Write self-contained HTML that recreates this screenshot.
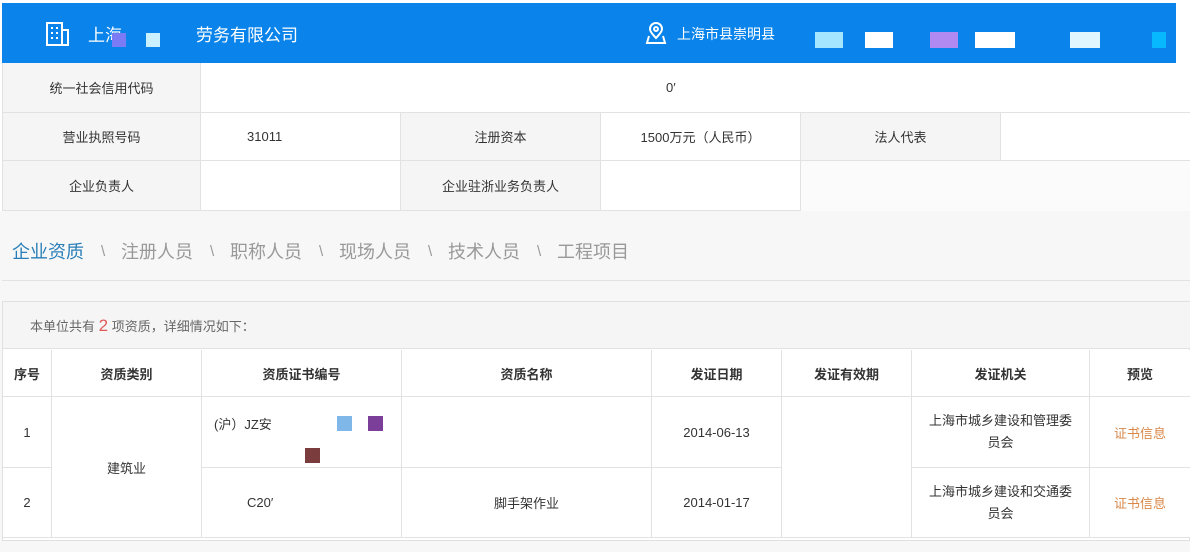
<!DOCTYPE html>
<html><head><meta charset="utf-8"><style>
*{margin:0;padding:0;box-sizing:border-box}
body{width:1190px;height:552px;background:#f7f7f7;font-family:"Liberation Sans","Noto Sans CJK SC",sans-serif;color:#333;position:relative;overflow:hidden;font-size:13px}
.a{position:absolute}
.c{position:absolute;display:flex;align-items:center;justify-content:center;text-align:center;border-right:1px solid #e2e2e2;border-bottom:1px solid #e2e2e2}
.g{background:#f5f5f5}
.w{background:#fff}
.t{position:absolute;top:238px;font-size:18px;color:#999}
.s{position:absolute;top:243px;font-size:15px;color:#999;font-family:"Liberation Sans",sans-serif}
</style></head><body>
<div class="a" style="left:0;top:0;width:1190px;height:63px;background:#fff"></div>
<div class="a" style="left:2px;top:3px;width:1174px;height:60px;background:#0a84ea"></div>
<svg class="a" style="left:45px;top:21px" width="26" height="26" viewBox="0 0 26 26" fill="none" stroke="#fff" stroke-width="2"><rect x="2" y="2" width="15" height="22"/><path d="M17 9h6v15H1M6 7h2M11 7h2M6 12h2M11 12h2M6 17h2M11 17h2"/></svg>
<div class="a" style="left:88px;top:21px;color:#fff;font-size:17px">上海</div>
<div class="a" style="left:112px;top:33px;width:14px;height:14px;background:#7b7cf5"></div>
<div class="a" style="left:146px;top:33px;width:14px;height:14px;background:#c8f0ff"></div>
<div class="a" style="left:196px;top:21px;color:#fff;font-size:17px">劳务有限公司</div>
<svg class="a" style="left:645px;top:22px" width="22" height="22" viewBox="0 0 22 22" fill="none" stroke="#fff" stroke-width="2"><path d="M11 16c-4-4-6-7-6-9a6 6 0 0112 0c0 2-2 5-6 9z"/><circle cx="11" cy="7" r="2"/><path d="M4 14l-2 7h18l-2-7"/></svg>
<div class="a" style="left:677px;top:24px;color:#fff;font-size:14px">上海市县崇明县</div>
<div class="a" style="left:815px;top:32px;width:28px;height:16px;background:#a4e6ff"></div>
<div class="a" style="left:865px;top:32px;width:28px;height:16px;background:#fff"></div>
<div class="a" style="left:930px;top:32px;width:28px;height:16px;background:#b08af0"></div>
<div class="a" style="left:975px;top:32px;width:40px;height:16px;background:#fff"></div>
<div class="a" style="left:1070px;top:32px;width:30px;height:16px;background:#e0f6ff"></div>
<div class="a" style="left:1152px;top:32px;width:14px;height:16px;background:#08b8ff"></div>

<div class="a" style="left:0;top:63px;width:1190px;height:148px;background:#fff"></div>
<div class="c g" style="left:2px;top:63px;width:199px;height:50px;border-left:1px solid #e2e2e2">统一社会信用代码</div>
<div class="c w" style="left:201px;top:63px;width:989px;height:50px;border-right:0;justify-content:flex-start;padding-left:465px">0′</div>
<div class="c g" style="left:2px;top:113px;width:199px;height:48px;border-left:1px solid #e2e2e2">营业执照号码</div>
<div class="c w" style="left:201px;top:113px;width:200px;height:48px;justify-content:flex-start;padding-left:46px">31011</div>
<div class="c g" style="left:401px;top:113px;width:200px;height:48px">注册资本</div>
<div class="c w" style="left:601px;top:113px;width:200px;height:48px">1500万元（人民币）</div>
<div class="c g" style="left:801px;top:113px;width:200px;height:48px">法人代表</div>
<div class="c w" style="left:1001px;top:113px;width:189px;height:48px;border-right:0"></div>
<div class="c g" style="left:2px;top:161px;width:199px;height:50px;border-left:1px solid #e2e2e2">企业负责人</div>
<div class="c w" style="left:201px;top:161px;width:200px;height:50px"></div>
<div class="c g" style="left:401px;top:161px;width:200px;height:50px">企业驻浙业务负责人</div>
<div class="c w" style="left:601px;top:161px;width:200px;height:50px"></div>
<div class="a" style="left:801px;top:161px;width:389px;height:50px;background:#fbfbfb"></div>

<div class="t" style="left:12px;color:#2a7fb8">企业资质</div>
<div class="s" style="left:101px">\</div>
<div class="t" style="left:121px">注册人员</div>
<div class="s" style="left:210px">\</div>
<div class="t" style="left:230px">职称人员</div>
<div class="s" style="left:319px">\</div>
<div class="t" style="left:339px">现场人员</div>
<div class="s" style="left:428px">\</div>
<div class="t" style="left:448px">技术人员</div>
<div class="s" style="left:537px">\</div>
<div class="t" style="left:557px">工程项目</div>
<div class="a" style="left:2px;top:280px;width:1188px;height:1px;background:#e2e2e2"></div>

<div class="a" style="left:2px;top:301px;width:1188px;height:240px;border:1px solid #e0e0e0;background:#fff"></div>
<div class="a" style="left:3px;top:302px;width:1187px;height:47px;background:#f5f5f5;border-bottom:1px solid #e2e2e2"></div>
<div class="a" style="left:30px;top:316px;color:#666;font-size:13px">本单位共有 <span style="color:#e05a5a;font-size:17px">2</span> 项资质，详细情况如下：</div>
<div class="c w" style="left:3px;top:350px;width:49px;height:47px;font-weight:bold">序号</div>
<div class="c w" style="left:52px;top:350px;width:150px;height:47px;font-weight:bold">资质类别</div>
<div class="c w" style="left:202px;top:350px;width:200px;height:47px;font-weight:bold">资质证书编号</div>
<div class="c w" style="left:402px;top:350px;width:250px;height:47px;font-weight:bold">资质名称</div>
<div class="c w" style="left:652px;top:350px;width:130px;height:47px;font-weight:bold">发证日期</div>
<div class="c w" style="left:782px;top:350px;width:130px;height:47px;font-weight:bold">发证有效期</div>
<div class="c w" style="left:912px;top:350px;width:178px;height:47px;font-weight:bold">发证机关</div>
<div class="c w" style="left:1090px;top:350px;width:100px;height:47px;font-weight:bold;border-right:0">预览</div>

<div class="c w" style="left:3px;top:397px;width:49px;height:71px">1</div>
<div class="c w" style="left:52px;top:397px;width:150px;height:141px">建筑业</div>
<div class="c w" style="left:202px;top:397px;width:200px;height:71px;align-items:flex-start;justify-content:flex-start;padding:17px 0 0 12px">(沪）JZ安</div>
<div class="a" style="left:337px;top:416px;width:15px;height:15px;background:#7fb8e8"></div>
<div class="a" style="left:368px;top:416px;width:15px;height:15px;background:#7b3f9a"></div>
<div class="a" style="left:305px;top:448px;width:15px;height:15px;background:#7a3c3c"></div>
<div class="c w" style="left:402px;top:397px;width:250px;height:71px"></div>
<div class="c w" style="left:652px;top:397px;width:130px;height:71px">2014-06-13</div>
<div class="c w" style="left:782px;top:397px;width:130px;height:141px"></div>
<div class="c w" style="left:912px;top:397px;width:178px;height:71px;padding:0 13px;line-height:22px">上海市城乡建设和管理委员会</div>
<div class="c w" style="left:1090px;top:397px;width:100px;height:71px;border-right:0;color:#d9884a">证书信息</div>

<div class="c w" style="left:3px;top:468px;width:49px;height:70px">2</div>
<div class="c w" style="left:202px;top:468px;width:200px;height:70px;justify-content:flex-start;padding-left:45px">C20′</div>
<div class="c w" style="left:402px;top:468px;width:250px;height:70px">脚手架作业</div>
<div class="c w" style="left:652px;top:468px;width:130px;height:70px">2014-01-17</div>
<div class="c w" style="left:912px;top:468px;width:178px;height:70px;padding:0 13px;line-height:22px">上海市城乡建设和交通委员会</div>
<div class="c w" style="left:1090px;top:468px;width:100px;height:70px;border-right:0;color:#d9884a">证书信息</div>
</body></html>
